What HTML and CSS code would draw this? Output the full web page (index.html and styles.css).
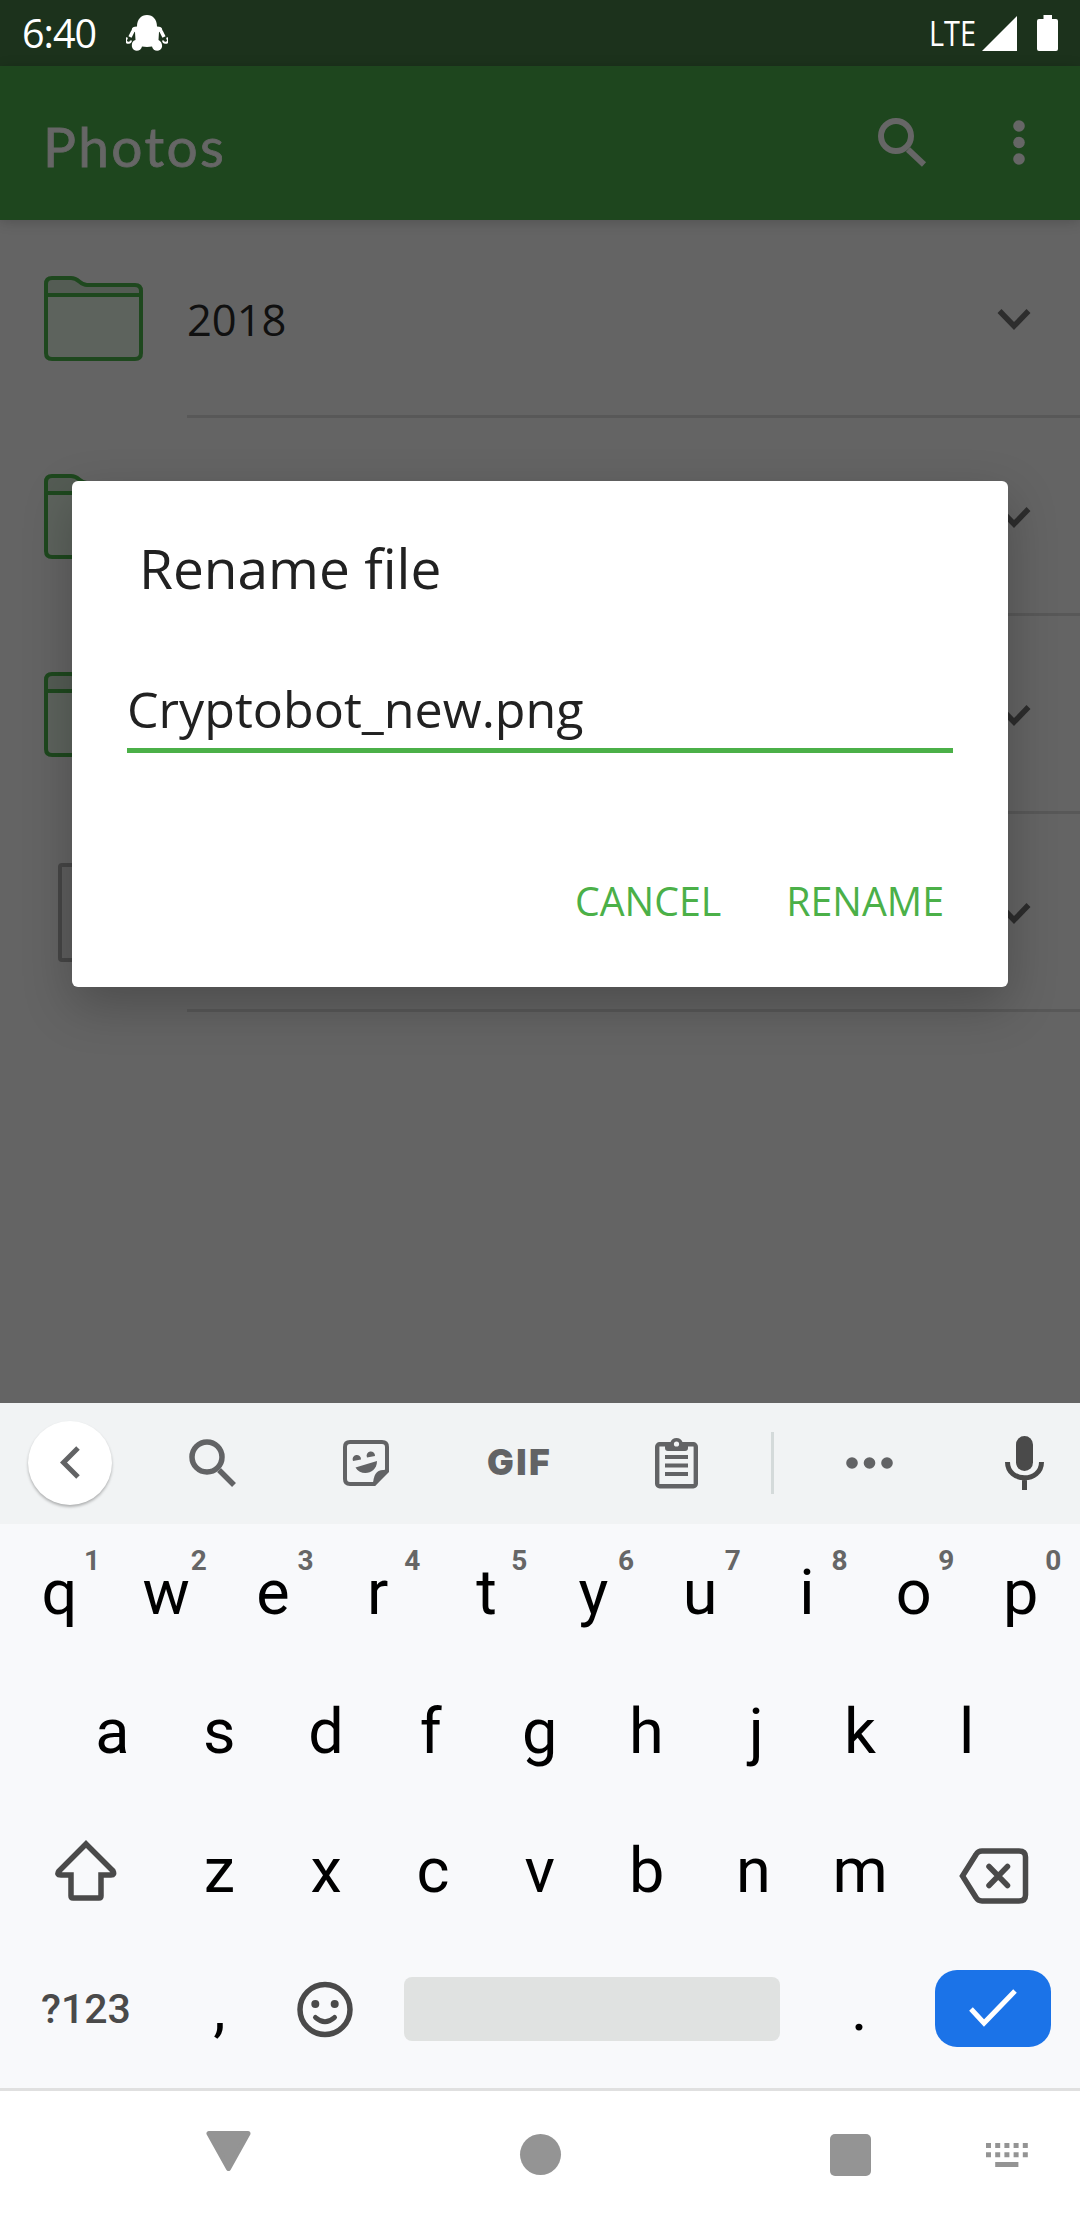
FILE: index.html
```html
<!DOCTYPE html>
<html lang="en">
<head>
<meta charset="utf-8">
<title>Photos</title>
<link rel="stylesheet" href="styles.css">
</head>
<body>
<div class="screen">
  <header class="status">
    <span class="time">6:40</span>
    <svg class="bot" width="42" height="36" viewBox="0 0 42 36"><path d="M21 0C15 0 11 4.500 11 11.500 7 11.500 5 13 6 16.500L9 17 9.500 25C6 26 5.500 29 6 32 7 37 15 37 16 31.500L21 32 26 31.500C27 37 35 37 36 32 36.500 29 35 26 32.500 25L33 17 36 16.500C37 13 35 11.500 31 11.500 31 4.500 27 0 21 0Z" fill="#fff"/><path d="M7 16L4 22M35 16L38 22" fill="none" stroke="#fff" stroke-width="3.500"/><path d="M1.500 23A2.500 2.500 0 1 0 5 25.500M40.500 23A2.500 2.500 0 1 1 37 25.500" fill="none" stroke="#fff" stroke-width="2"/></svg>
    <span class="lte">LTE</span>
    <svg class="signal" width="35" height="35" viewBox="0 0 35 35"><path d="M35 0V35H0Z" fill="#fff"/></svg>
    <svg class="battery" width="21" height="36" viewBox="0 0 21 36"><path d="M6.500 0H15V4H19Q21 4 21 6V34Q21 36 19 36H2Q0 36 0 34V6Q0 4 2 4H6.500Z" fill="#fff"/></svg>
  </header>
  <div class="appbar">
    <h1>Photos</h1>
    <svg class="search" width="49" height="49" viewBox="0 0 49 49" fill="none" stroke="#666" stroke-width="6"><circle cx="18" cy="18" r="15"/><path d="M30 31.500L46 46.500" /></svg>
    <svg class="more" width="12" height="46" viewBox="0 0 12 46" fill="#666"><circle cx="6" cy="6" r="5.800"/><circle cx="6" cy="22.500" r="5.800"/><circle cx="6" cy="39" r="5.800"/></svg>
  </div>
  <main class="list">
    <div class="row"><svg class="folder" width="99" height="85" viewBox="0 0 99 85"><use href="#folder"/></svg><div class="info"><span>2018</span><svg class="chev" width="34" height="21" viewBox="0 0 34 21"><use href="#chev"/></svg></div></div>
    <div class="row"><svg class="folder" width="99" height="85" viewBox="0 0 99 85"><use href="#folder"/></svg><div class="info"><svg class="chev" width="34" height="21" viewBox="0 0 34 21"><use href="#chev"/></svg></div></div>
    <div class="row"><svg class="folder" width="99" height="85" viewBox="0 0 99 85"><use href="#folder"/></svg><div class="info"><svg class="chev" width="34" height="21" viewBox="0 0 34 21"><use href="#chev"/></svg></div></div>
    <div class="row"><svg class="file" width="72" height="99" viewBox="0 0 72 99"><rect x="2" y="2" width="68" height="95" rx="2" fill="#5e5e5e" stroke="#464646" stroke-width="4"/></svg><div class="info"><svg class="chev" width="34" height="21" viewBox="0 0 34 21"><use href="#chev"/></svg></div></div>
  </main>
  <section class="dialog">
    <h2>Rename file</h2>
    <div class="field">Cryptobot_new.png</div>
    <div class="actions"><span>CANCEL</span><span>RENAME</span></div>
  </section>
  <section class="keyboard">
    <div class="tools">
      <div class="back"><svg width="20" height="33" viewBox="0 0 20 33"><path d="M18 2L3.500 16.500 18 31" fill="none" stroke="#626365" stroke-width="5"/></svg></div>
      <svg class="t-search" width="48" height="48" viewBox="0 0 48 48" fill="none" stroke="#626365" stroke-width="5.500"><circle cx="18" cy="18" r="15"/><path d="M30 31L45 46"/></svg>
      <svg class="t-sticker" width="46" height="46" viewBox="0 0 46 46" fill="#626365"><path d="M7 2H39Q44 2 44 7V30L31 44H7Q2 44 2 39V7Q2 2 7 2Z" fill="none" stroke="#626365" stroke-width="4"/><path d="M46 30H40Q30 30 30 46H32L46 32Z"/><path d="M10 21A4.200 4.200 0 1 1 18 19.500ZM24 17.500A4.200 4.200 0 1 1 32 16Z"/><path d="M12.500 27.500L34 21C34 34 18 37 12.500 27.500Z"/></svg>
      <span class="gif">GIF</span>
      <svg class="t-clip" width="43" height="52" viewBox="0 0 43 52" fill="#626365"><rect x="2.200" y="7.200" width="38.600" height="42" rx="2.500" fill="none" stroke="#626365" stroke-width="4.400"/><path d="M10 5H15.500A6.500 6.500 0 0 1 27.500 5H33V11Q33 14 30 14H13Q10 14 10 11Z"/><circle cx="21.500" cy="7" r="2.600" fill="#f1f3f4"/><path d="M10 18H33V22H10ZM10 26.500H33V30.500H10ZM10 35H33V39H10Z"/></svg>
      <i class="sep"></i>
      <svg class="t-dots" width="48" height="12" viewBox="0 0 48 12" fill="#626365"><circle cx="6" cy="6" r="5.800"/><circle cx="23.500" cy="6" r="5.800"/><circle cx="41" cy="6" r="5.800"/></svg>
      <svg class="t-mic" width="39" height="54" viewBox="0 0 39 54"><rect x="11" y="0" width="17" height="35" rx="8.500" fill="#4a4a4a"/><path d="M2.500 26C2.500 47 36.500 47 36.500 26M19.500 42V54" fill="none" stroke="#4a4a4a" stroke-width="5"/></svg>
    </div>
    <div class="keys top">
      <span>q<sup>1</sup></span><span>w<sup>2</sup></span><span>e<sup>3</sup></span><span><em>r</em><sup>4</sup></span><span>t<sup>5</sup></span><span>y<sup>6</sup></span><span>u<sup>7</sup></span><span>i<sup>8</sup></span><span>o<sup>9</sup></span><span>p<sup>0</sup></span>
    </div>
    <div class="keys mid">
      <span>a</span><span>s</span><span>d</span><span><em>f</em></span><span>g</span><span>h</span><span class="j">j</span><span>k</span><span>l</span>
    </div>
    <div class="keys low">
      <svg width="62" height="61" viewBox="0 0 62 61"><path d="M31 4L58 31Q60 35 56 35H46V56Q46 58 44 58H18Q16 58 16 56V35H6Q1 35 4 31Z" fill="none" stroke="#4a4a4a" stroke-width="5.500"/></svg>
      <span>z</span><span>x</span><span>c</span><span>v</span><span>b</span><span>n</span><span>m</span>
      <svg class="del" width="70" height="56" viewBox="0 0 70 56" fill="none" stroke="#4a4a4a" stroke-width="5.500"><path d="M3.500 28L17 6.500Q19 3 23 3H60Q66.500 3 66.500 9V47Q66.500 53 60 53H23Q19 53 17 49.500Z"/><path d="M30 18.500L48.500 37.500M48.500 18.500L30 37.500" stroke-linecap="round"/></svg>
    </div>
    <div class="keys bottom">
      <span class="sym">?123</span>
      <span class="comma">,</span>
      <svg class="emoji" width="56" height="57" viewBox="0 0 56 57" fill="#4a4a4a"><circle cx="28" cy="28.500" r="25" fill="none" stroke="#4a4a4a" stroke-width="5.500"/><circle cx="18.300" cy="23" r="4"/><circle cx="37.700" cy="23" r="4"/><path d="M18.500 36.500Q28 45 37.500 36.500" fill="none" stroke="#4a4a4a" stroke-width="5" stroke-linecap="round"/></svg>
      <i class="space"></i>
      <span class="dot">.</span>
      <b class="enter"><svg width="48" height="38" viewBox="0 0 48 38"><path d="M2 20L15 34 46 2" fill="none" stroke="#fff" stroke-width="5"/></svg></b>
    </div>
  </section>
  <nav class="nav">
    <svg class="n-back" width="45" height="40" viewBox="0 0 45 40"><path d="M3 2.500H42L22.500 37.500Z" fill="#949494" stroke="#949494" stroke-width="5" stroke-linejoin="round"/></svg>
    <i class="home"></i>
    <i class="recent"></i>
    <svg class="n-kb" width="42" height="24" viewBox="0 0 42 24" fill="none" stroke="#949494" stroke-width="5"><path d="M0 2.500H42M0 11.800H42" stroke-dasharray="5 4.200"/><path d="M9.200 21.500H32.400"/></svg>
  </nav>
</div>
<svg class="defs" width="0" height="0">
  <g id="folder"><path d="M2 19V8Q2 2 8 2H27C35 2 36 9 43 9H91Q97 9 97 15V19Z" fill="#545c54"/><path d="M2 19H97V83H2Z" fill="#5d635d"/><path d="M2 19V8Q2 2 8 2H27C35 2 36 9 43 9H91Q97 9 97 15V77Q97 83 91 83H8Q2 83 2 77V19H97" fill="none" stroke="#1e481e" stroke-width="4"/></g>
  <path id="chev" d="M2.500 2L17 17 31.500 2" fill="none" stroke="#2d2d2d" stroke-width="5.500"/>
</svg>
</body>
</html>
```
FILE: styles.css
```css
* { box-sizing: border-box; }
body { margin: 0; font-family: "Open Sans", "Noto Sans", sans-serif; }
svg { display: block; flex: none; }
.defs { position: absolute; }
.screen { position: relative; width: 1080px; height: 2220px; overflow: hidden; display: flex; flex-direction: column; background: #646464; }

.status { height: 66px; flex: none; display: flex; align-items: center; background: #1c321c; color: #fff; }
.time { width: 103px; margin-left: 22px; font-size: 39.500px; line-height: 66px; letter-spacing: -1px; }
.bot { margin-left: 1px; }
.lte { width: 44px; margin-left: 761px; font-size: 34px; line-height: 66px; transform: scaleX(.85); transform-origin: 0 50%; }
.signal { margin-left: 9px; }
.battery { margin-left: 20px; }

.appbar { position: relative; height: 154px; flex: none; display: flex; align-items: flex-start; background: #1e461e; box-shadow: 0 2px 12px rgba(0, 0, 0, .18); }
.appbar h1 { width: 831px; margin: 46px 0 0; padding-left: 43px; font: 400 55px/68px Lato, sans-serif; letter-spacing: 2.400px; color: #666; -webkit-text-stroke: .8px #666; }
.search { margin: 52px 0 0 47px; }
.more { margin: 54px 0 0 86px; }

.row { height: 198px; display: flex; align-items: flex-start; }
.folder { margin: 56px 44px 0; }
.file { margin: 49px 57px 0 58px; }
.info { flex: 1; height: 198px; display: flex; border-bottom: 3px solid #585858; }
.info span { font-size: 43.500px; line-height: 60px; margin-top: 70px; color: #101010; }
.chev { margin: 89px 49px 0 auto; }

.dialog { position: absolute; left: 72px; top: 481px; width: 936px; height: 506px; border-radius: 6px; background: #fff; color: #212121; padding: 0 55px; box-shadow: 0 18px 50px rgba(0, 0, 0, .24); }
.dialog h2 { margin: 47px 0 0 12px; font-weight: 400; font-size: 55px; line-height: 80px; }
.field { height: 97px; margin-top: 48px; font-size: 50.200px; line-height: 106px; border-bottom: 5px solid #4bb048; }
.actions { display: flex; justify-content: flex-end; gap: 65px; margin: 118px 9px 0 0; font-size: 39.300px; line-height: 60px; color: #4bb048; }

.keyboard { position: absolute; left: 0; top: 1403px; width: 1080px; height: 688px; background: #f8f9fb; border-bottom: 3px solid #e0e0e0; font-family: Roboto, sans-serif; }
.tools { height: 121px; padding-bottom: 2px; display: flex; align-items: center; background: #f1f3f4; }
.back { width: 84px; height: 84px; margin-left: 28px; border-radius: 50%; background: #fff; display: flex; align-items: center; justify-content: center; box-shadow: 0 2px 3px rgba(0, 0, 0, .28); }
.t-search { margin-left: 77px; }
.t-sticker { margin-left: 106px; }
.gif { width: 64px; margin-left: 98px; font: 900 35.500px/50px Inter, sans-serif; letter-spacing: 2.500px; color: #626365; }
.t-clip { margin-left: 104px; }
.sep { width: 3px; height: 62px; margin-left: 73px; background: #d4dada; }
.t-dots { margin-left: 72px; }
.t-mic { margin-left: 111px; }

.keys { height: 138.700px; display: flex; align-items: center; font-size: 63px; line-height: 140px; color: #000; }
.keys span { position: relative; width: 106.800px; text-align: center; }
.top { padding-left: 6px; }
.keys sup { position: absolute; top: 24px; left: 76px; width: 20px; font-size: 28px; font-weight: 700; line-height: 28px; color: #666; }
.keys em { font-style: normal; padding-right: 4px; }
.keys .j { padding-left: 6px; }
.mid { padding-left: 59px; }
.low svg { margin: 0 49px 0 55px; }
.low .del { margin: 11px 0 0 45px; }
.keys .sym { width: 90px; margin-left: 41px; font-size: 41px; font-weight: 500; color: #4a4a4a; }
.keys .comma { margin-left: 35px; }
.emoji { margin-left: 24px; }
.space { width: 376px; height: 64px; margin-left: 51px; border-radius: 8px; background: #e0e2e1; }
.keys .dot { margin-left: 26px; }
.enter { width: 116px; height: 77px; margin: 0 0 2px 22px; border-radius: 22px; background: #1b73e8; display: flex; align-items: center; justify-content: center; }

.nav { position: absolute; left: 0; top: 2091px; width: 1080px; height: 129px; display: flex; align-items: flex-start; background: #fff; }
.n-back { margin: 40px 0 0 206px; }
.home { width: 41px; height: 41px; margin: 43px 0 0 269px; border-radius: 50%; background: #949494; }
.recent { width: 41px; height: 42px; margin: 43px 0 0 269px; border-radius: 5px; background: #949494; }
.n-kb { margin: 52px 0 0 115px; }
```
